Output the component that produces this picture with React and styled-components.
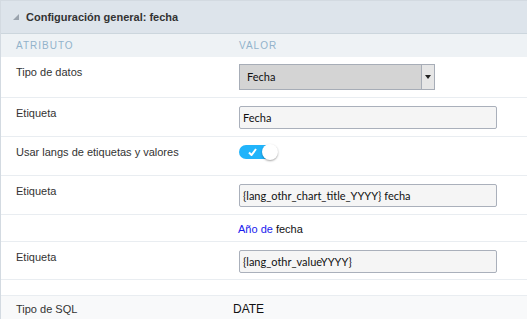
import React from 'react';
import styled, { createGlobalStyle } from 'styled-components';

const GlobalStyle = createGlobalStyle`
  body {
    margin: 0;
    background: #ffffff;
    font-family: "Liberation Sans", Arial, sans-serif;
  }
`;

const Panel = styled.div`
  border-top: 1px solid #d3dae1;
  border-left: 1px solid #d3dae1;
  background: #ffffff;
`;

const Header = styled.div`
  height: 32px;
  display: flex;
  align-items: center;
  gap: 7px;
  padding-left: 12px;
  background: #dde4eb;
  border-bottom: 1px solid #ccd6dd;
  font-size: 11px;
  font-weight: bold;
  color: #333;
`;

const Caret = styled.span`
  width: 0;
  height: 0;
  border-left: 6px solid transparent;
  border-bottom: 6px solid #9aa3ad;
`;

const Row = styled.div`
  display: grid;
  grid-template-columns: 223px 1fr;
  border-bottom: 1px solid #e9edf1;
  background: ${(p) => p.$bg || '#ffffff'};
`;

const HeadRow = styled(Row)`
  background: #eef2f5;
  border-bottom: none;
  height: 23px;
  align-items: center;
`;

const HeadCell = styled.div`
  padding-left: 15px;
  font-size: 10px;
  letter-spacing: 1px;
  color: #92b3cb;
`;

const Cell = styled.div`
  padding: ${(p) => p.$pad || '8px 0 7px 15px'};
  min-height: ${(p) => p.$min || '0'};
  font-size: 11px;
  line-height: 14px;
  color: #333;
`;

const SelectBox = styled.div`
  width: 194px;
  height: 24px;
  display: flex;
  border: 1px solid #a7adb7;
  background: #d4d4d4;
  font-family: Lato, sans-serif;
  font-size: 11px;
  color: #111;
`;

const SelectText = styled.div`
  flex: 1;
  display: flex;
  align-items: center;
  padding-left: 7px;
`;

const SelectButton = styled.div`
  width: 12px;
  display: flex;
  align-items: center;
  justify-content: center;
  border-left: 1px solid #a7adb7;
  background: #e6e6e6;

  &::after {
    content: '';
    border-left: 3px solid transparent;
    border-right: 3px solid transparent;
    border-top: 4px solid #222;
  }
`;

const TextInput = styled.div`
  width: 253px;
  height: 21px;
  display: flex;
  align-items: center;
  padding-left: 3px;
  border: 1px solid #aab0bb;
  border-radius: 2px;
  background: #f5f5f5;
  font-family: Lato, sans-serif;
  font-size: 11px;
  color: #111;
  box-sizing: content-box;
`;

const Toggle = styled.div`
  position: relative;
  width: 38px;
  height: 14px;
  border-radius: 7px;
  background: #21b4fb;
`;

const Check = styled.svg`
  position: absolute;
  left: 9px;
  top: 3px;
`;

const Knob = styled.span`
  position: absolute;
  right: -1px;
  top: -1px;
  width: 16px;
  height: 16px;
  border-radius: 50%;
  background: #ffffff;
  box-shadow: 0 1px 2px rgba(0, 0, 0, 0.35);
`;

const LinkText = styled.span`
  color: #1a1aee;
`;

const Plain = styled.span`
  color: #111;
`;

const Value = styled.span`
  font-size: 12px;
  color: #111;
`;

export default function App() {
  return (
    <>
      <GlobalStyle />
      <Panel>
        <Header>
          <Caret />
          Configuración general: fecha
        </Header>
        <HeadRow>
          <HeadCell>ATRIBUTO</HeadCell>
          <HeadCell>VALOR</HeadCell>
        </HeadRow>
        <Row>
          <Cell>Tipo de datos</Cell>
          <Cell $pad="7px 0 7px 15px">
            <SelectBox>
              <SelectText>Fecha</SelectText>
              <SelectButton />
            </SelectBox>
          </Cell>
        </Row>
        <Row>
          <Cell>Etiqueta</Cell>
          <Cell>
            <TextInput>Fecha</TextInput>
          </Cell>
        </Row>
        <Row>
          <Cell>Usar langs de etiquetas y valores</Cell>
          <Cell $pad="8px 0 16px 15px">
            <Toggle>
              <Check width="9" height="8" viewBox="0 0 9 8">
                <path d="M1 4.5 L3.5 7 L8 1" stroke="#fff" strokeWidth="2" fill="none" />
              </Check>
              <Knob />
            </Toggle>
          </Cell>
        </Row>
        <Row>
          <Cell>Etiqueta</Cell>
          <Cell>
            <TextInput>{'{lang_othr_chart_title_YYYY} fecha'}</TextInput>
          </Cell>
        </Row>
        <Row>
          <Cell />
          <Cell $pad="7px 0 5px 14px">
            <LinkText>Año de</LinkText> <Plain>fecha</Plain>
          </Cell>
        </Row>
        <Row>
          <Cell>Etiqueta</Cell>
          <Cell $pad="8px 0 6px 15px">
            <TextInput>{'{lang_othr_valueYYYY}'}</TextInput>
          </Cell>
        </Row>
        <Row>
          <Cell $pad="0" $min="15px" />
          <Cell $pad="0" />
        </Row>
        <Row $bg="#f8f9fa">
          <Cell $pad="6px 0 8px 15px">Tipo de SQL</Cell>
          <Cell $pad="6px 0 8px 9px">
            <Value>DATE</Value>
          </Cell>
        </Row>
      </Panel>
    </>
  );
}
